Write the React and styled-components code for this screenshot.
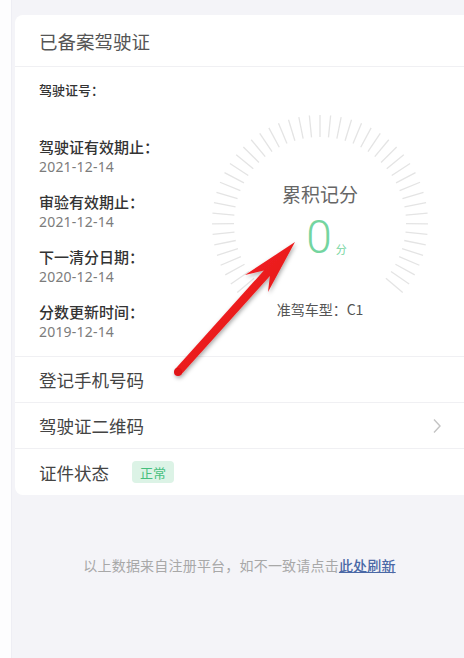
import React from 'react';
import styled, { createGlobalStyle } from 'styled-components';

const GlobalStyle = createGlobalStyle`
  * { box-sizing: border-box; }
  html, body { margin: 0; padding: 0; background: #fdfdfe; }
  body {
    font-family: "Noto Sans", "Noto Sans CJK SC", sans-serif;
    -webkit-font-smoothing: antialiased;
  }
`;

const Colors = {
  bg: '#f4f4f8',
  line: '#f0f0f3',
  title: '#555555',
  label: '#333333',
  sub: '#7c7c7c',
  green: '#74d5a0',
  link: '#4a68a6',
};

const Page = styled.div`
  position: relative;
  width: 464px;
  height: 658px;
  display: flex;
  overflow: hidden;
`;

const Strip = styled.div`
  width: 12px;
  background: #fdfdfe;
  border-right: 1px solid #eeeef4;
`;

const Main = styled.div`
  flex: 1;
  background: ${Colors.bg};
  padding: 15px 0 0 3px;
  display: flex;
  flex-direction: column;
`;

// card
const Card = styled.div`
  background: #ffffff;
  border-radius: 8px 0 0 8px;
  display: flex;
  flex-direction: column;
`;

const CardTitle = styled.div`
  height: 52px;
  padding-left: 24px;
  display: flex;
  align-items: center;
  font-family: "Noto Sans CJK SC", sans-serif;
  font-size: 18.5px;
  color: ${Colors.title};
  border-bottom: 1px solid ${Colors.line};
`;

const InfoBody = styled.div`
  display: flex;
  height: 290px;
  border-bottom: 1px solid ${Colors.line};
`;

const InfoColumn = styled.div`
  flex: 1;
  padding: 13px 0 0 24px;
  display: flex;
  flex-direction: column;
`;

const InfoItem = styled.div`
  display: flex;
  flex-direction: column;
  margin-bottom: ${(p) => (p.$first ? '17px' : '15px')};
`;

const InfoLabel = styled.div`
  height: 20px;
  line-height: 20px;
  font-family: "Noto Sans CJK SC", sans-serif;
  font-size: ${(p) => (p.$small ? '13px' : '15px')};
  font-weight: 500;
  color: ${Colors.label};
`;

const InfoValue = styled.div`
  height: 20px;
  line-height: 20px;
  font-family: "Noto Sans", sans-serif;
  font-size: 14px;
  letter-spacing: 0.2px;
  color: ${Colors.sub};
`;

// gauge
const GaugeBox = styled.div`
  position: relative;
  width: 232px;
  height: 210px;
  margin: 46px 28px 0 0;
  display: flex;
  flex-direction: column;
  align-items: center;
`;

const GaugeRing = styled.svg`
  position: absolute;
  top: 0;
  left: 0;
`;

const GaugeTitle = styled.div`
  position: relative;
  margin-top: 69px;
  line-height: 24px;
  font-family: "Noto Sans CJK SC", sans-serif;
  font-size: 19px;
  color: #666666;
`;

const ScoreRow = styled.div`
  position: relative;
  display: flex;
  align-items: flex-end;
  margin-top: 6px;
  padding-left: 13px;
  height: 50px;
`;

const Score = styled.span`
  font-family: Roboto, "Noto Sans", sans-serif;
  font-weight: 300;
  font-size: 46px;
  line-height: 50px;
  color: ${Colors.green};
`;

const ScoreUnit = styled.span`
  font-family: "Noto Sans CJK SC", sans-serif;
  font-size: 11px;
  line-height: 16px;
  margin: 0 0 5px 4px;
  color: ${Colors.green};
`;

const LicenseType = styled.div`
  position: relative;
  margin-top: 37px;
  line-height: 20px;
  font-family: "Noto Sans CJK SC", sans-serif;
  font-size: 14px;
  color: #555555;
`;

// rows
const Row = styled.div`
  height: 46px;
  padding: 0 22px 0 24px;
  display: flex;
  align-items: center;
  font-family: "Noto Sans CJK SC", sans-serif;
  font-size: 17.5px;
  color: #444444;
  border-bottom: ${(p) => (p.$last ? 'none' : `1px solid ${Colors.line}`)};
`;

const RowText = styled.span`
  flex: ${(p) => (p.$grow ? 1 : 'none')};
`;

const Badge = styled.span`
  margin-left: 23px;
  width: 42px;
  height: 22px;
  border-radius: 4px;
  background: #dcf3e6;
  color: #45bf7d;
  font-size: 13px;
  display: flex;
  align-items: center;
  justify-content: center;
`;

const Footer = styled.div`
  margin-top: 60px;
  text-align: center;
  font-family: "Noto Sans CJK SC", sans-serif;
  font-size: 14px;
  line-height: 20px;
  letter-spacing: 0.2px;
  color: #a8a8a8;
`;

const FooterLink = styled.span`
  color: ${Colors.link};
  font-weight: 500;
  text-decoration: underline;
`;

// annotation arrow
const ArrowLayer = styled.svg`
  position: absolute;
  top: 0;
  left: 0;
  pointer-events: none;
`;

const infoList = [
  { label: '驾驶证有效期止：', value: '2021-12-14' },
  { label: '审验有效期止：', value: '2021-12-14' },
  { label: '下一清分日期：', value: '2020-12-14' },
  { label: '分数更新时间：', value: '2019-12-14' },
];

const Ticks = () => {
  const cx = 116;
  const cy = 110;
  const count = 47;
  const start = -130;
  const end = 130;
  const lines = [];
  for (let i = 0; i < count; i++) {
    const a = ((start + ((end - start) * i) / (count - 1)) * Math.PI) / 180;
    const s = Math.sin(a);
    const c = -Math.cos(a);
    lines.push(
      <line
        key={i}
        x1={cx + s * 86}
        y1={cy + c * 86}
        x2={cx + s * 108}
        y2={cy + c * 108}
        stroke="#e4e4e4"
        strokeWidth="1.3"
      />
    );
  }
  return (
    <GaugeRing width="232" height="210" viewBox="0 0 232 210">
      {lines}
    </GaugeRing>
  );
};

const Chevron = () => (
  <svg width="10" height="16" viewBox="0 0 10 16">
    <polyline points="2,1.5 8,8 2,14.5" fill="none" stroke="#c4c4c4" strokeWidth="1.4" />
  </svg>
);

const Arrow = () => (
  <ArrowLayer width="464" height="658" viewBox="0 0 464 658">
    <defs>
      <filter id="shadow" x="-20%" y="-20%" width="140%" height="140%">
        <feDropShadow dx="1" dy="2" stdDeviation="2" floodColor="#000" floodOpacity="0.35" />
      </filter>
      <linearGradient id="redGrad" x1="0" y1="0" x2="1" y2="1">
        <stop offset="0" stopColor="#ff2a2a" />
        <stop offset="1" stopColor="#d80f14" />
      </linearGradient>
    </defs>
    <g filter="url(#shadow)">
      <polygon
        points="181,374.7 269.9,275.9 268,292 295,242 245,275 263.9,270.5 175,369.3"
        fill="url(#redGrad)"
        strokeLinejoin="round"
      />
      <circle cx="178" cy="372" r="4" fill="#e01217" />
    </g>
  </ArrowLayer>
);

const App = () => {
  return (
    <Page>
      <GlobalStyle />
      <Strip />
      <Main>
        <Card>
          <CardTitle>已备案驾驶证</CardTitle>
          <InfoBody>
            <InfoColumn>
              <InfoItem $first>
                <InfoLabel $small>驾驶证号：</InfoLabel>
                <InfoValue />
              </InfoItem>
              {infoList.map((item) => (
                <InfoItem key={item.label}>
                  <InfoLabel>{item.label}</InfoLabel>
                  <InfoValue>{item.value}</InfoValue>
                </InfoItem>
              ))}
            </InfoColumn>
            <GaugeBox>
              <Ticks />
              <GaugeTitle>累积记分</GaugeTitle>
              <ScoreRow>
                <Score>0</Score>
                <ScoreUnit>分</ScoreUnit>
              </ScoreRow>
              <LicenseType>准驾车型：C1</LicenseType>
            </GaugeBox>
          </InfoBody>
          <Row>
            <RowText>登记手机号码</RowText>
          </Row>
          <Row>
            <RowText $grow>驾驶证二维码</RowText>
            <Chevron />
          </Row>
          <Row $last>
            <RowText>证件状态</RowText>
            <Badge>正常</Badge>
          </Row>
        </Card>
        <Footer>
          以上数据来自注册平台，如不一致请点击<FooterLink>此处刷新</FooterLink>
        </Footer>
      </Main>
      <Arrow />
    </Page>
  );
};

export default App;
